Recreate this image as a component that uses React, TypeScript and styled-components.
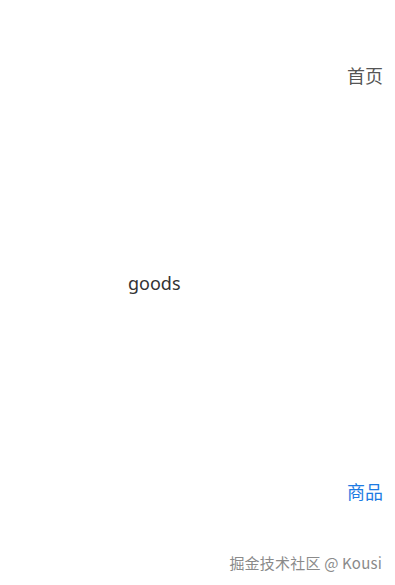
import React from 'react'
import styled, { createGlobalStyle } from 'styled-components'

const GlobalStyle = createGlobalStyle`
  html, body {
    margin: 0;
    padding: 0;
    background: #ffffff;
  }
  body {
    font-family: "Noto Sans CJK SC", "Noto Sans", sans-serif;
  }
`

const Page = styled.div`
  width: 395px;
  height: 585px;
  display: flex;
  flex-direction: column;
  position: relative;
  overflow: hidden;
`

const NavRow = styled.div<{ $top: number }>`
  display: flex;
  justify-content: flex-end;
  padding: ${p => p.$top}px 12px 0 0;
`

const NavLink = styled.span<{ $active?: boolean }>`
  font-size: 18px;
  line-height: 20px;
  color: ${p => (p.$active ? '#1d7be3' : '#555555')};
`

const Content = styled.div`
  padding: 188px 0 0 128px;
  font-family: "Noto Sans", sans-serif;
  font-size: 18px;
  line-height: 20px;
  color: #333333;
`

const Watermark = styled.div`
  position: absolute;
  right: 13px;
  bottom: 13px;
  font-size: 15px;
  line-height: 18px;
  color: #8a8a8a;
  letter-spacing: 0.2px;
`

const App: React.FC = () => {
  return (
    <>
      <GlobalStyle />
      <Page>
        <NavRow $top={65}>
          <NavLink>首页</NavLink>
        </NavRow>
        <Content>goods</Content>
        <NavRow $top={188}>
          <NavLink $active>商品</NavLink>
        </NavRow>
        <Watermark>掘金技术社区 @ Kousi</Watermark>
      </Page>
    </>
  )
}

export default App
